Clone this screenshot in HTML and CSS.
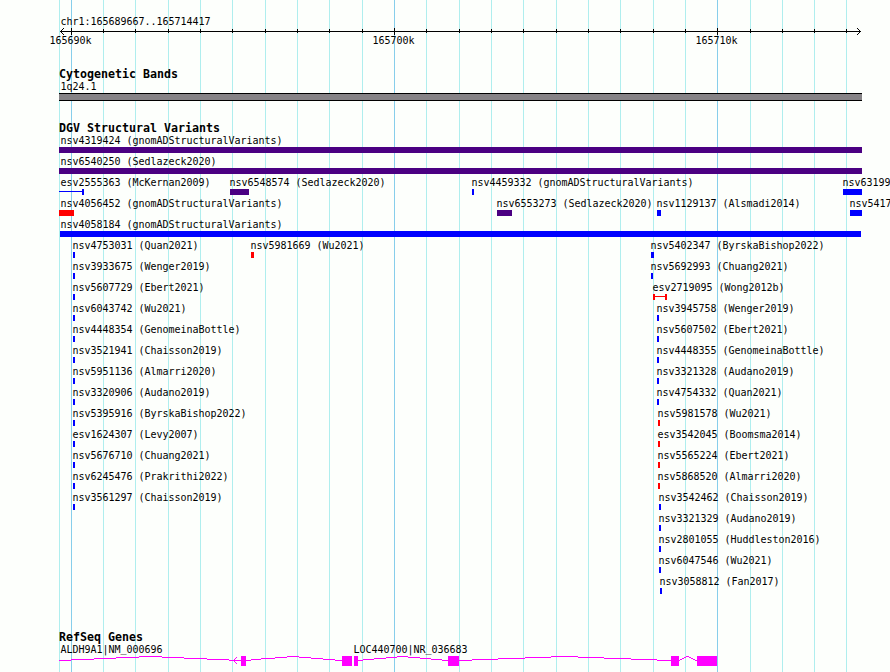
FILE: index.html
```html
<!DOCTYPE html>
<html lang="en">
<head>
<meta charset="utf-8">
<title>chr1:165689667..165714417</title>
<link rel="stylesheet" href="styles.css">
</head>
<body>
<main class="browser">
<svg class="grid" width="890" height="672" shape-rendering="crispEdges" aria-hidden="true">
<path class="minor" d="M59.5 0v672M103.5 0v672M135.5 0v672M168.5 0v672M200.5 0v672M232.5 0v672M265.5 0v672M297.5 0v672M329.5 0v672M362.5 0v672M426.5 0v672M459.5 0v672M491.5 0v672M523.5 0v672M556.5 0v672M588.5 0v672M620.5 0v672M653.5 0v672M685.5 0v672M750.5 0v672M782.5 0v672M814.5 0v672M846.5 0v672"/>
<path class="major" d="M71.5 0v672M394.5 0v672M717.5 0v672"/>
</svg>

<header class="ruler">
<div class="label region">chr1:165689667..165714417</div>
<svg class="axis" width="890" height="8" shape-rendering="crispEdges" aria-hidden="true">
<path d="M60 4.5H861M71.5 1v7M394.5 1v7M717.5 1v7M103.5 2v4M135.5 2v4M168.5 2v4M200.5 2v4M232.5 2v4M265.5 2v4M297.5 2v4M329.5 2v4M362.5 2v4M426.5 2v4M459.5 2v4M491.5 2v4M523.5 2v4M556.5 2v4M588.5 2v4M620.5 2v4M653.5 2v4M685.5 2v4M750.5 2v4M782.5 2v4M814.5 2v4M846.5 2v4"/>
<path d="M61 3.5h1M62 2.5h1M63 1.5h1M61 5.5h1M62 6.5h1M63 7.5h1M859 3.5h1M858 2.5h1M857 1.5h1M859 5.5h1M858 6.5h1M857 7.5h1"/>
</svg>
<div class="row ticks">
<span class="label" style="--x:49px">165690k</span>
<span class="label" style="--x:372px">165700k</span>
<span class="label" style="--x:695px">165710k</span>
</div>
</header>

<section class="track bands">
<h2>Cytogenetic Bands</h2>
<div class="label region">1q24.1</div>
<div class="band"></div>
</section>

<section class="track variants">
<h2>DGV Structural Variants</h2>
<div class="row"><div class="f edge gain" style="--x:59px;--w:803px"><span class="label">nsv4319424 (gnomADStructuralVariants)</span><i></i></div></div>
<div class="row"><div class="f edge gain" style="--x:59px;--w:803px"><span class="label">nsv6540250 (Sedlazeck2020)</span><i></i></div></div>
<div class="row"><div class="f edge open" style="--x:59px;--w:25px"><span class="label">esv2555363 (McKernan2009)</span><i class="span"></i></div><div class="f gain" style="--x:230px;--w:19px"><span class="label">nsv6548574 (Sedlazeck2020)</span><i></i></div><div class="f" style="--x:472px;--w:2px"><span class="label">nsv4459332 (gnomADStructuralVariants)</span><i></i></div><div class="f" style="--x:843px;--w:19px"><span class="label">nsv63199</span><i></i></div></div>
<div class="row"><div class="f edge loss" style="--x:59px;--w:15px"><span class="label">nsv4056452 (gnomADStructuralVariants)</span><i></i></div><div class="f gain" style="--x:497px;--w:15px"><span class="label">nsv6553273 (Sedlazeck2020)</span><i></i></div><div class="f" style="--x:657px;--w:4px"><span class="label">nsv1129137 (Alsmadi2014)</span><i></i></div><div class="f" style="--x:850px;--w:12px"><span class="label">nsv5417</span><i></i></div></div>
<div class="row"><div class="f flush" style="--x:60px;--w:801px"><span class="label">nsv4058184 (gnomADStructuralVariants)</span><i></i></div></div>
<div class="row"><div class="f" style="--x:73px;--w:2px"><span class="label">nsv4753031 (Quan2021)</span><i></i></div><div class="f loss" style="--x:251px;--w:3px"><span class="label">nsv5981669 (Wu2021)</span><i></i></div><div class="f" style="--x:651px;--w:3px"><span class="label">nsv5402347 (ByrskaBishop2022)</span><i></i></div></div>
<div class="row"><div class="f" style="--x:73px;--w:2px"><span class="label">nsv3933675 (Wenger2019)</span><i></i></div><div class="f" style="--x:651px;--w:2px"><span class="label">nsv5692993 (Chuang2021)</span><i></i></div></div>
<div class="row"><div class="f" style="--x:73px;--w:2px"><span class="label">nsv5607729 (Ebert2021)</span><i></i></div><div class="f loss" style="--x:653px;--w:14px"><span class="label">esv2719095 (Wong2012b)</span><i class="span"></i></div></div>
<div class="row"><div class="f" style="--x:73px;--w:2px"><span class="label">nsv6043742 (Wu2021)</span><i></i></div><div class="f" style="--x:657px;--w:2px"><span class="label">nsv3945758 (Wenger2019)</span><i></i></div></div>
<div class="row"><div class="f" style="--x:73px;--w:2px"><span class="label">nsv4448354 (GenomeinaBottle)</span><i></i></div><div class="f" style="--x:657px;--w:2px"><span class="label">nsv5607502 (Ebert2021)</span><i></i></div></div>
<div class="row"><div class="f" style="--x:73px;--w:2px"><span class="label">nsv3521941 (Chaisson2019)</span><i></i></div><div class="f" style="--x:657px;--w:2px"><span class="label">nsv4448355 (GenomeinaBottle)</span><i></i></div></div>
<div class="row"><div class="f" style="--x:73px;--w:2px"><span class="label">nsv5951136 (Almarri2020)</span><i></i></div><div class="f" style="--x:657px;--w:2px"><span class="label">nsv3321328 (Audano2019)</span><i></i></div></div>
<div class="row"><div class="f" style="--x:73px;--w:2px"><span class="label">nsv3320906 (Audano2019)</span><i></i></div><div class="f" style="--x:657px;--w:2px"><span class="label">nsv4754332 (Quan2021)</span><i></i></div></div>
<div class="row"><div class="f" style="--x:73px;--w:2px"><span class="label">nsv5395916 (ByrskaBishop2022)</span><i></i></div><div class="f loss" style="--x:658px;--w:2px"><span class="label">nsv5981578 (Wu2021)</span><i></i></div></div>
<div class="row"><div class="f" style="--x:73px;--w:2px"><span class="label">esv1624307 (Levy2007)</span><i></i></div><div class="f loss" style="--x:658px;--w:2px"><span class="label">esv3542045 (Boomsma2014)</span><i></i></div></div>
<div class="row"><div class="f" style="--x:73px;--w:2px"><span class="label">nsv5676710 (Chuang2021)</span><i></i></div><div class="f loss" style="--x:658px;--w:2px"><span class="label">nsv5565224 (Ebert2021)</span><i></i></div></div>
<div class="row"><div class="f" style="--x:73px;--w:2px"><span class="label">nsv6245476 (Prakrithi2022)</span><i></i></div><div class="f loss" style="--x:658px;--w:2px"><span class="label">nsv5868520 (Almarri2020)</span><i></i></div></div>
<div class="row"><div class="f" style="--x:73px;--w:2px"><span class="label">nsv3561297 (Chaisson2019)</span><i></i></div><div class="f" style="--x:659px;--w:2px"><span class="label">nsv3542462 (Chaisson2019)</span><i></i></div></div>
<div class="row"><div class="f" style="--x:659px;--w:2px"><span class="label">nsv3321329 (Audano2019)</span><i></i></div></div>
<div class="row"><div class="f" style="--x:659px;--w:2px"><span class="label">nsv2801055 (Huddleston2016)</span><i></i></div></div>
<div class="row"><div class="f" style="--x:659px;--w:2px"><span class="label">nsv6047546 (Wu2021)</span><i></i></div></div>
<div class="row"><div class="f" style="--x:660px;--w:2px"><span class="label">nsv3058812 (Fan2017)</span><i></i></div></div>
</section>

<section class="track genes">
<h2>RefSeq Genes</h2>
<div class="row names">
<span class="label" style="--x:60px">ALDH9A1|NM<span class="low">_</span>000696</span>
<span class="label" style="--x:353px">LOC440700|NR<span class="low">_</span>036683</span>
</div>
<svg class="models" width="890" height="16" viewBox="0 656 890 16" shape-rendering="crispEdges" aria-hidden="true">
<path class="exon" d="M241 656h5v10h-5zM342 656h10v10h-10zM354 656h4v10h-4zM448 656h11v10h-11zM671 656h8v10h-8zM697 656h20v10h-20z"/>
<path class="intron" d="M59 660.5H71M71 659.5H94M94 658.5H116M116 657.5H139M139 656.5H162M162 657.5H184M184 658.5H207M207 659.5H229M229 660.5H241"/>
<path class="intron" d="M246 660.5H251M251 659.5H261M261 658.5H275M275 657.5H287M287 656.5H299M299 657.5H311M311 658.5H323M323 659.5H335M335 660.5H342"/>
<path class="intron" d="M358 660.5H363M363 659.5H374M374 658.5H386M386 657.5H397M397 656.5H408M408 657.5H420M420 658.5H431M431 659.5H442M442 660.5H448"/>
<path class="intron" d="M459 660.5H472M472 659.5H498M498 658.5H525M525 657.5H551M551 656.5H578M578 657.5H604M604 658.5H631M631 659.5H657M657 660.5H671"/>
<path class="intron" d="M679 660.5H680M680 659.5H682M682 658.5H684M684 657.5H686M686 656.5H689M689 657.5H691M691 658.5H693M693 659.5H695M695 660.5H697"/>
<path class="intron" d="M234 659.5h1M235 658.5h1M236 657.5h1M234 661.5h1M235 662.5h1M236 663.5h1"/>
</svg>
</section>
</main>
</body>
</html>
```
FILE: styles.css
```css
body {
  margin: 0;
  background: #fdfffc;
  color: #000;
}

.browser {
  position: relative;
  isolation: isolate;
  box-sizing: border-box;
  width: 890px;
  height: 672px;
  padding-top: 15px;
  overflow: hidden;
}

.grid {
  position: absolute;
  inset: 0;
  z-index: -1;
}

.minor { stroke: #afeeee; }
.major { stroke: #87ceeb; }

.label {
  display: block;
  height: 13px;
  padding-left: 0.5px;
  font: 10px/13px "DejaVu Sans Mono", monospace;
  letter-spacing: -0.0205px;
  white-space: nowrap;
}

.region { margin-left: 60px; }

.row {
  display: grid;
  grid-template-columns: 890px;
}

.row > * {
  grid-area: 1 / 1;
  margin-left: var(--x);
}

.ruler { height: 52px; }

.axis {
  display: block;
  margin-top: -1px;
  stroke: #000;
}

.ticks { margin-top: -1px; }

h2 {
  height: 13px;
  margin: 0 0 0 59px;
  font: bold 11.63px/15px "DejaVu Sans Mono", monospace;
  letter-spacing: -0.002px;
  white-space: nowrap;
}

.bands { height: 54px; }

.band {
  box-sizing: border-box;
  width: 803px;
  height: 8px;
  margin-left: 59px;
  border: solid #000;
  border-width: 1px 0;
  background: #868386;
}

.variants { height: 509px; }

.variants .row { height: 21px; }

.f {
  --color: #00f;
  width: var(--w);
}

.gain { --color: #4b0082; }
.loss { --color: #f00; }

.f .label { margin-left: -1px; }
.edge .label { margin-left: 1px; }
.flush .label { margin-left: 0; }

.f i {
  display: block;
  box-sizing: border-box;
  height: 6px;
  background: var(--color);
}

.f .span {
  border: solid var(--color);
  border-width: 0 2px;
  background: linear-gradient(var(--color), var(--color)) 0 2px / 100% 1px no-repeat;
}

.open .span { border-left: 0; }

.low {
  display: inline-block;
  height: 13px;
  vertical-align: top;
  transform: translateY(-1px);
}

.models { display: block; }

.exon { fill: #f0f; }
.intron { stroke: #f0f; }
```
